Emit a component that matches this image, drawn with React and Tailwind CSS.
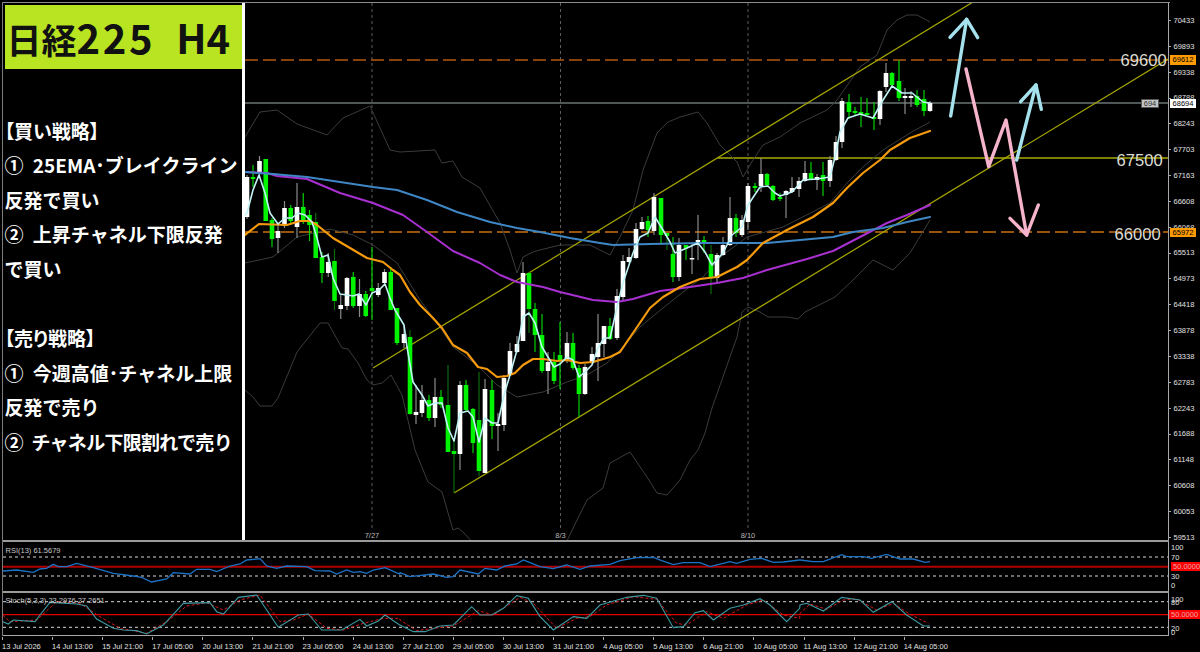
import React from "react";

// zoom crops were read at 3x, so points are stored as crop px and mapped back to page px
const z3 = (ox, oy, pts) => pts.map(([x, y]) => `${ox + x / 3},${oy + y / 3}`).join(" ");
const pg = (pts) => pts.map(([x, y]) => `${x},${y}`).join(" ");

const upperBand = [[245,137],[260,112],[277,110],[297,124],[327,135],[343,118],[370,106],[390,150],[400,152],[435,150],[442,163],[453,161],[462,177],[480,188],[500,223],[510,250],[517,273],[523,257],[533,252],[540,250],[560,245],[590,245],[610,255],[620,237],[633,210],[643,170],[657,133],[668,122],[680,117],[698,112],[707,123],[720,145],[737,162],[743,177],[753,160],[763,145],[780,137],[800,123],[827,110],[837,100],[860,67],[877,55],[887,30],[897,20],[907,15],[917,15],[930,22]];
const midBand = [[245,263],[273,257],[297,237],[330,229],[353,235],[373,245],[397,263],[420,300],[437,323],[453,347],[477,365],[497,385],[517,397],[543,392],[567,382],[587,375],[607,363],[620,350],[640,327],[663,308],[683,292],[703,277],[723,255],[747,237],[783,227],[830,203],[847,183],[863,167],[883,150],[910,133],[930,122]];
const lowerBand = [[245,390],[253,397],[260,406],[272,406],[278,398],[297,352],[320,323],[328,323],[342,348],[348,349],[358,363],[367,380],[373,385],[382,383],[391,375],[402,395],[415,450],[428,482],[442,492],[453,530],[458,528],[463,532],[475,545],[565,545],[577,520],[587,500],[603,488],[610,463],[630,452],[647,477],[657,493],[667,495],[680,480],[690,460],[698,450],[705,433],[712,408],[737,337],[742,312],[748,307],[760,312],[768,317],[787,317],[798,319],[805,312],[835,297],[853,280],[873,260],[893,270],[910,253],[930,220]];
const ema = [[245,235],[259,224],[287,225],[300,221],[310,221],[317,225],[333,238],[350,248],[367,258],[383,262],[393,270],[400,275],[410,292],[420,305],[432,317],[442,328],[453,345],[467,353],[478,367],[487,369],[497,377],[507,376],[515,373],[523,365],[533,359],[543,359],[557,361],[567,360],[580,363],[593,362],[610,357],[620,352],[633,333],[650,308],[663,297],[680,287],[700,279],[717,277],[737,267],[747,260],[763,243],[787,230],[813,217],[833,203],[847,188],[863,173],[880,160],[890,150],[910,138],[930,131]];
const purple = [[245,172],[267,173],[277,176],[307,179],[340,193],[373,203],[403,215],[427,232],[453,251],[480,263],[500,275],[517,282],[543,287],[560,292],[593,300],[617,302],[633,299],[660,291],[683,288],[717,283],[743,278],[767,270],[807,259],[833,251],[860,237],[887,223],[907,215],[930,205]];
const blue = [[245,172],[273,174],[307,177],[340,182],[373,187],[397,190],[427,200],[457,212],[490,222],[517,228],[540,232],[570,238],[600,243],[613,245],[650,244],[700,243],[767,243],[800,240],[833,237],[853,232],[883,228],[907,222],[930,217]];
const fast = [[245,215],[247,213],[253,190],[259,175],[265,193],[270,213],[278,224],[285,218],[292,218],[298,213],[305,215],[312,222],[317,238],[322,257],[328,255],[333,278],[340,294],[347,295],[353,296],[359,294],[366,305],[372,293],[379,290],[385,284],[390,298],[395,310],[404,325],[407,347],[413,382],[422,395],[428,406],[435,403],[442,403],[448,428],[454,441],[460,413],[468,411],[473,417],[479,442],[485,418],[492,423],[498,423],[504,395],[510,375],[517,350],[523,317],[529,313],[535,323],[542,347],[548,357],[554,367],[560,364],[567,357],[573,360],[579,377],[585,372],[592,365],[598,348],[604,338],[610,338],[617,307],[623,283],[633,253],[640,237],[648,233],[655,217],[663,230],[670,242],[675,253],[687,248],[698,243],[705,252],[712,265],[723,253],[732,235],[742,227],[748,205],[760,187],[768,186],[775,193],[780,196],[792,192],[803,180],[817,179],[830,177],[835,157],[840,132],[848,118],[860,114],[873,118],[883,100],[892,86],[902,93],[912,93],[923,102],[930,103]];

// type, x, wick top, wick bottom, body top, body bottom. d = green body with dark wick
const candles = [
  ["w",247,175,219,177,217],["g",253,165,187,177,179],["w",259.5,156,177,161,174],["g",265.75,159,221,159,221],["g",272,218,247,220,239],["w",278,225,253,231,238],
  ["w",284.5,201,228,208,226],["g",290.75,205,224,208,221],["w",297,183,238,207,227],["g",303.25,193,224,207,222],["g",309.5,210,241,215,225],["d",315.75,213,258,222,258],
  ["g",322,252,283,257,273],["w",328.25,253,277,262,273],["d",334.5,249,310,261,301],["w",340.75,295,319,305,309],["w",347,277,310,278,306],["g",353.25,272,308,277,306],
  ["w",359.5,279,317,294,306],["g",365.75,291,317,294,316],["g",372,247,320,288,291],["w",378.25,283,297,288,295],["w",384.5,269,285,272,283],["g",390.75,267,310,272,310],
  ["g",397,308,345,308,343],["w",404,325,348,334,343],["d",410,330,415,337,414],["w",416,385,424,412,415],["w",422,385,417,400,413],["g",429,395,421,400,418],
  ["w",435,378,427,397,418],["g",441,390,408,397,405],["d",448,365,452,405,452],["d",454,440,493,451,454],["w",460,381,470,385,454],["g",466,380,412,385,410],
  ["g",473,408,453,409,443],["d",479,372,476,420,471],["w",485,379,473,389,473],["g",492,380,439,390,426],["w",498,413,451,424,426],["w",504,375,431,378,425],
  ["w",510,343,376,351,375],["w",517,336,353,344,352],["w",523,262,341,273,341],["d",529,272,333,273,309],["g",535,303,352,309,335],["g",542,314,373,335,371],
  ["w",548,352,394,362,371],["g",554,352,384,362,381],["g",560,322,389,355,361],["w",567,332,363,343,361],["g",573,333,370,343,368],["g",579,365,417,368,394],
  ["w",585,364,395,367,394],["w",592,347,365,354,363],["w",598,314,381,343,357],["w",604,326,357,326,344],["g",610,318,340,326,339],["w",617,289,340,296,338],
  ["w",623,255,300,261,297],["w",629,248,263,257,262],["w",636,223,259,229,258],["w",642,217,230,222,229],["g",648,216,237,221,230],["w",654,193,235,197,231],
  ["g",661,198,245,198,235],["d",667,233,250,233,236],["g",673,237,282,254,277],["w",679,238,281,245,277],["g",686,245,260,245,248],["w",692,243,274,258,259],
  ["w",698,215,260,240,244],["g",704,236,253,240,244],["d",711,245,294,254,277],["w",717,253,284,255,278],["w",723,237,256,245,255],["w",730,197,246,218,245],
  ["g",736,214,237,218,233],["w",742,215,237,220,235],["w",748,183,230,186,222],["g",755,183,192,186,188],["w",761,158,192,174,186],["g",767,173,186,174,185],
  ["g",773,185,201,186,200],["g",780,193,201,197,199],["w",786,190,218,191,195],["w",792,177,193,188,192],["w",799,177,197,181,189],["w",805,161,182,173,181],
  ["g",811,162,180,173,180],["w",817,174,190,177,180],["g",823,162,196,175,181],["w",830,156,187,160,181],["w",836,136,161,142,160],["w",842,98,148,101,142],
  ["g",849,94,119,102,112],["g",855,107,115,111,113],["g",861,97,127,112,114],["g",867,98,115,113,115],["g",874,102,130,117,119],["w",880,90,125,91,119],
  ["w",886,63,92,73,87],["g",892,72,88,73,85],["g",899,60,101,81,98],["w",905,88,114,96,98],["w",911,91,107,96,98],["g",917,90,107,96,105],["g",924,90,116,99,111],["w",930,101,112,103,111],
];

const bodyFill = { w: "#ffffff", g: "#00f400", d: "#00f400" };
const wickFill = { w: "#8a8a8a", g: "#00d000", d: "#0a6a0a" };

const prices = ["70433","69893","69338","68788","68243","67703","67163","66608","66068","65513","64973","64418","63878","63338","62783","62243","61688","61148","60608","60053","59513"];
const times = ["13 Jul 2026","14 Jul 13:00","15 Jul 21:00","17 Jul 05:00","20 Jul 13:00","21 Jul 21:00","23 Jul 05:00","24 Jul 13:00","27 Jul 21:00","29 Jul 05:00","30 Jul 13:00","31 Jul 21:00","4 Aug 05:00","5 Aug 13:00","6 Aug 21:00","10 Aug 05:00","11 Aug 13:00","12 Aug 21:00","14 Aug 05:00"];

const rsiLine = [
  z3(0,520,[[8,153],[50,150],[100,157],[120,147],[140,145],[160,133],[175,140],[200,140],[230,130],[280,143],[340,160],[400,168],[425,172],[455,186],[500,177],[520,158],[570,162],[590,148],[630,148],[650,155],[690,138],[720,132],[740,120],[780,116],[800,138],[830,145],[860,138],[920,140],[945,152],[990,153],[1010,162],[1040,150],[1060,157],[1080,155],[1100,160],[1120,150],[1155,143],[1199,162]]),
  z3(400,540,[[0,98],[30,110],[100,102],[140,112],[160,110],[180,90],[235,102],[255,85],[290,90],[315,78],[350,72],[370,60],[420,80],[460,86],[500,75],[540,88],[570,78],[630,73],[660,62],[710,53],[760,52],[785,62],[820,74],[850,68],[900,68],[930,80],[990,65],[1010,70],[1050,58],[1085,55],[1120,67],[1150,66],[1199,60]]),
  z3(800,520,[[0,120],[40,125],[70,125],[125,104],[140,110],[190,110],[215,115],[260,103],[300,117],[340,117],[375,127],[390,125]]),
].join(" ");

const stochMain = [
  z3(0,520,[[8,305],[25,312],[40,300],[105,305],[120,285],[150,247],[230,252],[260,258],[290,297],[340,325],[370,330],[410,332],[440,342],[490,315],[550,250],[630,248],[650,275],[670,282],[715,232],[770,225],[835,322],[895,285],[925,282],[965,330],[1025,330],[1080,298],[1100,318],[1135,303],[1155,285],[1199,315]]),
  z3(400,540,[[0,255],[40,275],[75,275],[120,258],[160,255],[215,200],[240,225],[275,225],[310,205],[350,167],[385,175],[420,230],[460,270],[520,230],[560,235],[600,195],[680,172],[730,166],[770,175],[820,263],[850,260],[885,218],[910,212],[940,240],[990,205],[1030,195],[1080,176],[1110,195],[1160,245],[1199,205]]),
  z3(800,520,[[0,255],[20,250],[70,273],[125,232],[180,240],[220,277],[275,245],[320,285],[370,318],[390,318]]),
].join(" ");

const stochSignal = [
  z3(0,520,[[8,285],[30,305],[110,300],[170,245],[240,250],[300,290],[360,325],[440,340],[500,305],[560,258],[620,248],[670,270],[720,240],[780,225],[840,305],[880,300],[925,282],[980,325],[1030,330],[1090,310],[1150,295],[1199,295]]),
  z3(400,540,[[0,240],[50,272],[100,265],[160,258],[235,212],[280,225],[360,172],[400,190],[470,265],[530,235],[570,230],[620,195],[700,170],[770,178],[830,250],[860,255],[920,215],[970,235],[1040,195],[1090,180],[1150,225],[1199,235]]),
  z3(800,520,[[0,280],[30,252],[80,268],[130,240],[170,237],[230,270],[280,250],[330,283],[385,310]]),
].join(" ");

const stochTicks = [["100", 2],["80", 5],["20", 31],["0", 35]];

const MainChart = () => (
  <svg viewBox="245 3 923 537" width="923" height="537" className="block">
    <g stroke="#5c5c5c" strokeDasharray="3 3">
      <line x1="372" y1="3" x2="372" y2="530" />
      <line x1="560.5" y1="3" x2="560.5" y2="530" />
      <line x1="748" y1="3" x2="748" y2="530" />
    </g>
    <line x1="245" y1="60" x2="1168" y2="60" stroke="#b25a12" strokeWidth="1.5" strokeDasharray="13 5" />
    <line x1="245" y1="232" x2="1168" y2="232" stroke="#c87010" strokeWidth="1.3" strokeDasharray="13 5" />
    <line x1="245" y1="103" x2="1168" y2="103" stroke="#4e5656" strokeWidth="1.8" />
    <line x1="718" y1="158" x2="1168" y2="158" stroke="#808000" strokeWidth="1.8" />
    <g fill="none" stroke="#3a3c3a" strokeWidth="1">
      <polyline points={pg(upperBand)} />
      <polyline points={pg(midBand)} />
      <polyline points={pg(lowerBand)} />
    </g>
    <g stroke="#a8a800" strokeWidth="1.2">
      <line x1="373" y1="368" x2="973" y2="2" />
      <line x1="454" y1="493" x2="1168" y2="59" />
    </g>
    {candles.map(([t, x, hi, lo, top, bot]) => (
      <g key={x}>
        <rect x={x - 0.6} y={hi} width="1.2" height={lo - hi} fill={wickFill[t]} />
        <rect x={x - 2.3} y={top} width="4.6" height={Math.max(bot - top, 1.5)} fill={bodyFill[t]} />
      </g>
    ))}
    <g fill="none" strokeLinejoin="round" strokeLinecap="round">
      <polyline points={pg(purple)} stroke="#a82fd0" strokeWidth="2" />
      <polyline points={pg(blue)} stroke="#3f86c4" strokeWidth="2" />
      <polyline points={pg(ema)} stroke="#f59a0c" strokeWidth="2.2" />
      <polyline points={pg(fast)} stroke="#c0f2f6" strokeWidth="1.6" />
      <polyline points={z3(800,0,[[452,348],[500,58]])} stroke="#a6e2ee" strokeWidth="3.4" />
      <polyline points={z3(800,0,[[450,112],[500,58],[533,113]])} stroke="#a6e2ee" strokeWidth="3.4" />
      <polyline points={z3(800,0,[[650,480],[708,255]])} stroke="#a6e2ee" strokeWidth="3.4" />
      <polyline points={z3(800,0,[[662,305],[708,255],[724,328]])} stroke="#a6e2ee" strokeWidth="3.4" />
      <polyline points={z3(800,0,[[498,207],[566,500],[618,360],[680,705]])} stroke="#f6b4cc" strokeWidth="3.4" />
      <polyline points={z3(800,0,[[630,655],[680,705],[715,615]])} stroke="#f6b4cc" strokeWidth="3.4" />
    </g>
    <g fill="#dcdcd4" fontSize="16.6" fontFamily="'Liberation Sans', sans-serif">
      <text x="1120.5" y="65.8">69600</text>
      <text x="1116.5" y="166">67500</text>
      <text x="1114.5" y="240">66000</text>
    </g>
    <g fill="#b8b8b8" fontSize="7.5" fontFamily="'Liberation Sans', sans-serif" textAnchor="middle">
      <text x="372" y="538">7/27</text>
      <text x="560.5" y="538">8/3</text>
      <text x="748" y="538">8/10</text>
    </g>
  </svg>
);

const PriceAxis = () => (
  <div className="relative w-[32px] border-l border-[#a8a8a8] pt-[4.6px] text-[7.5px] text-[#e0e0e0]">
    {prices.map((p) => (
      <div key={p} className="flex h-[25.85px] items-center gap-[2.5px]">
        <span className="h-px w-[2px] bg-[#a8a8a8]" />
        <span>{p}</span>
      </div>
    ))}
    <div className="absolute left-[1px] top-[52px] flex h-[9.5px] w-[26px] items-center justify-center bg-[#ff9a00] text-black">69612</div>
    <div className="absolute left-[1px] top-[96px] flex h-[8.5px] w-[26px] items-center justify-center bg-white text-black">68694</div>
    <div className="absolute left-[1px] top-[225px] flex h-[9px] w-[26px] items-center justify-center bg-[#ff9a00] text-black">65972</div>
    <div className="absolute -left-[28px] top-[96px] flex h-[8.5px] w-[18px] items-center justify-center border border-[#555] bg-[#c4c4c4] text-[#333]">694</div>
  </div>
);

const Sidebar = () => (
  <aside className="w-[242px] border-r-[3.5px] border-white pl-[1.5px] pt-[1.5px] font-['Noto_Sans_CJK_JP',sans-serif] text-white">
    <div className="flex h-[64px] w-[237px] items-center gap-[21px] whitespace-pre bg-[#b9e422] pl-[2px] font-bold leading-none text-[#111]">
      <span className="flex items-baseline">
        <span className="text-[35px]">日経</span>
        <span className="text-[40px] tracking-[2.6px]">225</span>
      </span>
      <span className="text-[40px]">H4</span>
    </div>
    <div className="mt-[45px] flex flex-col whitespace-nowrap text-[19px] font-bold leading-[34.6px]">
      <p className="[font-feature-settings:'palt']">【買い戦略】</p>
      <p><span className="mr-[5px]">①</span> 25EMA･ブレイクライン</p>
      <p>反発で買い</p>
      <p><span className="mr-[5px]">②</span> 上昇チャネル下限反発</p>
      <p>で買い</p>
      <p className="h-[34.6px]" />
      <p className="[font-feature-settings:'palt']">【売り戦略】</p>
      <p><span className="mr-[5px]">①</span> 今週高値･チャネル上限</p>
      <p>反発で売り</p>
      <p className="tracking-[-0.7px]"><span className="mr-[5px]">②</span> チャネル下限割れで売り</p>
    </div>
  </aside>
);

const RsiPane = () => (
  <div className="flex h-[49px]">
    <div className="relative w-[1165px]">
      <svg viewBox="3 542 1165 49" width="1165" height="49" className="block">
        <g stroke="#d8d8d8" strokeDasharray="3 3">
          <line x1="3" y1="557" x2="1168" y2="557" />
          <line x1="3" y1="576" x2="1168" y2="576" />
        </g>
        <line x1="3" y1="566.8" x2="1168" y2="566.8" stroke="#b00000" strokeWidth="2" />
        <polyline points={rsiLine} fill="none" stroke="#1c72c4" strokeWidth="1.3" />
      </svg>
      <span className="absolute left-[2.5px] top-[3px] text-[7.5px] text-[#c8c8c8]">RSI(13) 61.5679</span>
    </div>
    <div className="flex w-[32px] flex-col justify-between border-l border-[#a8a8a8] pb-[1px] pl-[2px] pt-px text-[7.5px] leading-[9px] text-[#e0e0e0]">
      <span>100</span>
      <span>70</span>
      <span className="bg-[#ff0000] pl-[2px] text-[#e8a8a8]">50.0000</span>
      <span>30</span>
      <span>0</span>
    </div>
  </div>
);

const StochPane = () => (
  <div className="flex h-[42px]">
    <div className="relative w-[1165px]">
      <svg viewBox="3 593 1165 42" width="1165" height="42" className="block">
        <g stroke="#d8d8d8" strokeDasharray="3 3">
          <line x1="3" y1="601.7" x2="1168" y2="601.7" />
          <line x1="3" y1="627.3" x2="1168" y2="627.3" />
        </g>
        <line x1="3" y1="614.7" x2="1168" y2="614.7" stroke="#e00000" strokeWidth="1.3" />
        <polyline points={stochSignal} fill="none" stroke="#d81818" strokeWidth="1" strokeDasharray="3 2" />
        <polyline points={stochMain} fill="none" stroke="#3e9aa2" strokeWidth="1.1" />
      </svg>
      <span className="absolute left-[2.5px] top-[2px] text-[7.5px] text-[#c8c8c8]">Stoch(5,3,3) 23.2976 27.2651</span>
    </div>
    <div className="relative w-[32px] border-l border-[#a8a8a8] text-[7.5px] leading-[9px] text-[#e0e0e0]">
      {stochTicks.map(([label, top]) => (
        <span key={label} className="absolute left-[2px]" style={{ top }}>{label}</span>
      ))}
      <span className="absolute left-[0px] right-0 top-[17px] bg-[#ff0000] pl-[2px] text-[#e8a8a8]">50.0000</span>
    </div>
  </div>
);

const App = () => (
  <div className="flex h-[652px] w-[1200px] flex-col overflow-hidden bg-black pl-[2px] pt-[2px] font-['Liberation_Sans',sans-serif]">
    <div className="border-l border-[#7c7c7c]">
      <div className="mr-[30px] h-px bg-[#8c8c8c]" />
      <div className="flex h-[537px]">
        <Sidebar />
        <MainChart />
        <PriceAxis />
      </div>
      <div className="mr-[31px] h-[2px] bg-[#9a9a9a]" />
      <RsiPane />
      <div className="mr-[31px] h-[2px] bg-[#9a9a9a]" />
      <StochPane />
      <div className="mr-[31px] h-px bg-[#a8a8a8]" />
    </div>
    <div className="flex pt-px text-[7.5px] text-[#e0e0e0]">
      {times.map((t) => (
        <div key={t} className="w-[50.1px] shrink-0 whitespace-nowrap">
          <span className="block h-[3px] w-px bg-[#a8a8a8]" />
          <span className="block pt-[1px]">{t}</span>
        </div>
      ))}
    </div>
  </div>
);

export default App;
